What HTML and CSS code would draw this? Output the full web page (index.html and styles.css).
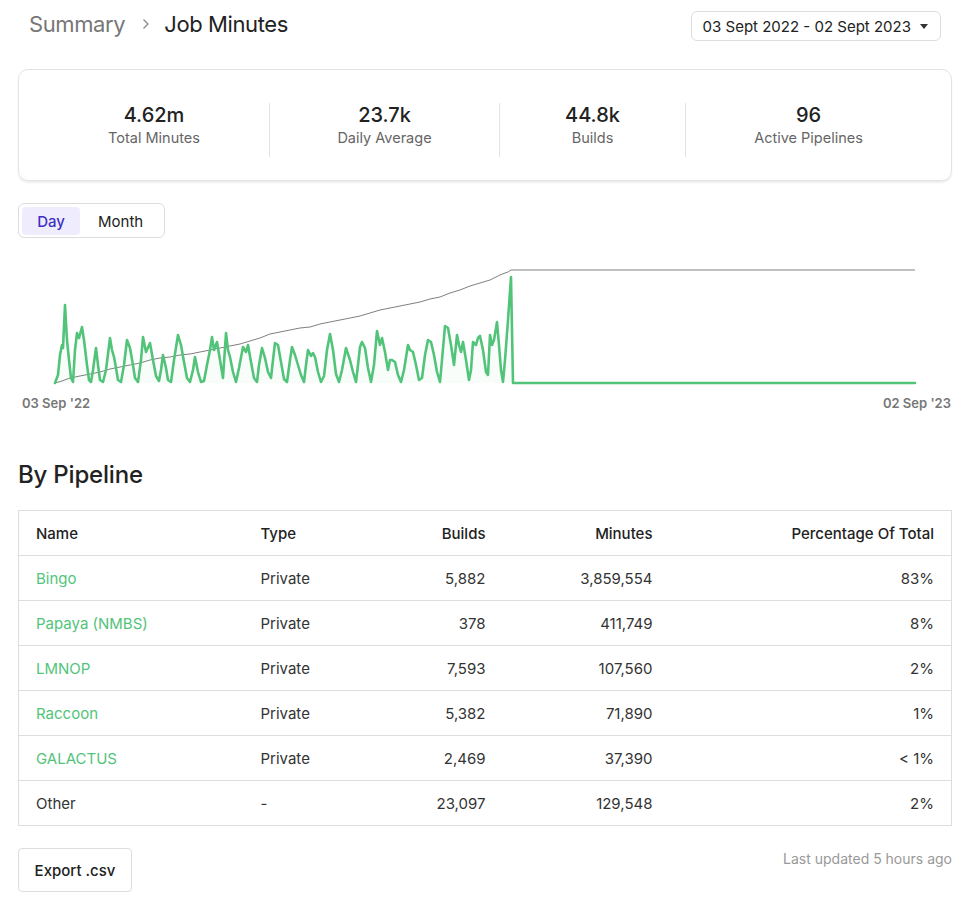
FILE: index.html
```html
<!DOCTYPE html>
<html lang="en">
<head>
<meta charset="utf-8">
<title>Job Minutes</title>
<link rel="stylesheet" href="styles.css">
</head>
<body>
<div class="page">
  <header class="header">
    <nav class="crumbs">
      <span class="crumb-muted">Summary</span>
      <svg class="chev" width="8" height="12" viewBox="0 0 8 12"><polyline points="1.5,1.5 6,6 1.5,10.5" fill="none" stroke="#8a8a8a" stroke-width="1.3"/></svg>
      <span class="crumb-current">Job Minutes</span>
    </nav>
    <button class="date-btn">03 Sept 2022 - 02 Sept 2023
      <svg class="caret" width="8" height="5" viewBox="0 0 8 5"><polygon points="0,0 8,0 4,5" fill="#333"/></svg>
    </button>
  </header>

  <section class="stats">
    <div class="stat s1"><div class="stat-val">4.62m</div><div class="stat-lbl">Total Minutes</div></div>
    <div class="stat s2"><div class="stat-val">23.7k</div><div class="stat-lbl">Daily Average</div></div>
    <div class="stat s3"><div class="stat-val">44.8k</div><div class="stat-lbl">Builds</div></div>
    <div class="stat s4"><div class="stat-val">96</div><div class="stat-lbl">Active Pipelines</div></div>
  </section>

  <div class="toggle">
    <button class="tog active">Day</button>
    <button class="tog">Month</button>
  </div>

  <div class="chart">
    <svg width="934" height="136" viewBox="0 0 934 136">
      <g transform="translate(-18,-255)">
        <polygon fill="#52c47a" fill-opacity="0.035" points="55,383 58,375 60,355 62,345 63,348 65,305 67,340 69,360 71,378 73,382 75,350 77,333 79,338 82,327 84,340 87,365 89,380 91,382 93,370 96,348 98,365 100,380 103,382 106,370 110,338 112,350 114,357 116,368 118,380 121,382 124,365 127,340 130,348 133,365 135,378 138,382 141,360 143,337 146,352 150,343 153,360 156,376 159,381 161,370 163,355 166,368 168,380 171,382 174,360 178,335 181,345 184,362 187,378 190,382 193,370 195,357 198,372 201,382 204,381 207,365 210,350 212,337 214,350 217,342 220,360 223,378 226,333 228,350 230,357 233,372 236,382 239,368 243,347 246,352 248,345 251,362 254,378 257,382 259,365 262,348 265,358 268,372 271,378 273,360 275,343 278,345 281,362 284,379 287,382 290,360 292,347 295,355 298,365 301,375 304,382 306,365 308,350 311,356 313,353 315,357 318,372 321,382 324,376 327,350 330,334 333,350 336,374 339,382 342,370 346,348 348,354 350,360 353,372 356,382 358,365 360,347 362,342 365,348 368,368 371,382 374,365 377,331 380,345 382,338 385,352 388,370 390,360 392,360 395,362 398,375 401,382 404,370 408,345 410,350 413,352 416,365 419,380 422,378 425,355 428,340 431,342 434,355 437,372 440,382 442,360 445,326 448,328 451,345 454,365 457,335 459,345 461,352 463,342 466,360 469,380 471,370 473,342 476,345 478,338 480,336 483,350 486,372 488,375 490,335 492,345 494,340 497,322 499,345 501,370 503,382 505,360 508,320 511,277 513,383"/>
        <polyline fill="none" stroke="#808080" stroke-width="1" points="55,383 62,381 70,378 80,376 90,374 100,372 110,369 120,367 130,365 140,363 150,360 160,358 170,357 180,355 190,354 200,352 210,350 220,348 230,346 240,344 250,341 260,338 270,334 280,332 290,330 300,328 310,327 320,324 330,322 340,320 350,318 360,316 370,313 380,310 390,308 400,306 410,304 420,302 430,299 440,297 450,293 460,290 470,286 480,283 490,280 500,275 505,273 508,272 511,270 915,270"/>
        <polyline fill="none" stroke="#52c47a" stroke-width="2.6" stroke-linejoin="round" stroke-linecap="round" points="55,383 58,375 60,355 62,345 63,348 65,305 67,340 69,360 71,378 73,382 75,350 77,333 79,338 82,327 84,340 87,365 89,380 91,382 93,370 96,348 98,365 100,380 103,382 106,370 110,338 112,350 114,357 116,368 118,380 121,382 124,365 127,340 130,348 133,365 135,378 138,382 141,360 143,337 146,352 150,343 153,360 156,376 159,381 161,370 163,355 166,368 168,380 171,382 174,360 178,335 181,345 184,362 187,378 190,382 193,370 195,357 198,372 201,382 204,381 207,365 210,350 212,337 214,350 217,342 220,360 223,378 226,333 228,350 230,357 233,372 236,382 239,368 243,347 246,352 248,345 251,362 254,378 257,382 259,365 262,348 265,358 268,372 271,378 273,360 275,343 278,345 281,362 284,379 287,382 290,360 292,347 295,355 298,365 301,375 304,382 306,365 308,350 311,356 313,353 315,357 318,372 321,382 324,376 327,350 330,334 333,350 336,374 339,382 342,370 346,348 348,354 350,360 353,372 356,382 358,365 360,347 362,342 365,348 368,368 371,382 374,365 377,331 380,345 382,338 385,352 388,370 390,360 392,360 395,362 398,375 401,382 404,370 408,345 410,350 413,352 416,365 419,380 422,378 425,355 428,340 431,342 434,355 437,372 440,382 442,360 445,326 448,328 451,345 454,365 457,335 459,345 461,352 463,342 466,360 469,380 471,370 473,342 476,345 478,338 480,336 483,350 486,372 488,375 490,335 492,345 494,340 497,322 499,345 501,370 503,382 505,360 508,320 511,277 513,383 915,383"/>
      </g>
    </svg>
    <div class="axis"><span>03 Sep '22</span><span>02 Sep '23</span></div>
  </div>

  <h2 class="section-title">By Pipeline</h2>

  <table class="tbl">
    <colgroup><col class="c1"><col class="c2"><col class="c3"><col class="c4"><col class="c5"></colgroup>
    <thead>
      <tr><th>Name</th><th>Type</th><th class="num">Builds</th><th class="num">Minutes</th><th class="num">Percentage Of Total</th></tr>
    </thead>
    <tbody>
      <tr><td><a class="pl">Bingo</a></td><td>Private</td><td class="num">5,882</td><td class="num">3,859,554</td><td class="num">83%</td></tr>
      <tr><td><a class="pl">Papaya (NMBS)</a></td><td>Private</td><td class="num">378</td><td class="num">411,749</td><td class="num">8%</td></tr>
      <tr><td><a class="pl">LMNOP</a></td><td>Private</td><td class="num">7,593</td><td class="num">107,560</td><td class="num">2%</td></tr>
      <tr><td><a class="pl">Raccoon</a></td><td>Private</td><td class="num">5,382</td><td class="num">71,890</td><td class="num">1%</td></tr>
      <tr><td><a class="pl">GALACTUS</a></td><td>Private</td><td class="num">2,469</td><td class="num">37,390</td><td class="num">&lt; 1%</td></tr>
      <tr><td>Other</td><td>-</td><td class="num">23,097</td><td class="num">129,548</td><td class="num">2%</td></tr>
    </tbody>
  </table>

  <footer class="footer">
    <button class="export">Export .csv</button>
    <span class="updated">Last updated 5 hours ago</span>
  </footer>
</div>
</body>
</html>
```
FILE: styles.css
```css
* { box-sizing: border-box; }
body {
  margin: 0;
  font-family: Inter, "Noto Sans", "Liberation Sans", sans-serif;
  color: #222;
  background: #fff;
}
.page {
  width: 934px;
  margin-left: 18px;
}
.header {
  display: flex;
  justify-content: space-between;
  align-items: center;
  padding-top: 10px;
  padding-right: 11px;
  height: 41px;
}
.crumbs {
  display: flex;
  align-items: center;
  padding-left: 11px;
  font-size: 22px;
  letter-spacing: -0.4px;
  line-height: 28px;
  margin-top: -3px;
}
.crumb-muted { color: #777; }
.chev { margin: 0 14px 0 17px; }
.crumb-current { color: #222; }
.date-btn {
  font-family: inherit;
  font-size: 15px;
  color: #222;
  background: #fff;
  border: 1px solid #ddd;
  border-radius: 6px;
  height: 30px;
  padding: 0 12px 0 11px;
  margin-top: 1px;
  display: flex;
  align-items: center;
  gap: 9px;
}
.stats {
  margin-top: 28px;
  border: 1px solid #e3e3e3;
  border-radius: 10px;
  box-shadow: 0 2px 2px rgba(0,0,0,0.07);
  display: grid;
  grid-template-columns: 230px 230px 186px 1fr;
  padding: 33px 20px 23px;
  height: 112px;
}
.stat {
  text-align: center;
  padding-bottom: 8px;
}
.stat + .stat { border-left: 1px solid #e3e3e3; }
.stat-val {
  font-size: 20px;
  font-weight: 500;
  line-height: 24px;
  color: #222;
}
.stat-lbl {
  font-size: 14.5px;
  line-height: 22px;
  color: #666;
}
.toggle {
  margin-top: 22px;
  display: inline-flex;
  border: 1px solid #ddd;
  border-radius: 6px;
  padding: 3px;
  height: 35px;
}
.tog {
  font-family: inherit;
  font-size: 15px;
  border: 0;
  background: transparent;
  color: #222;
  border-radius: 4px;
  height: 28px;
  padding: 0 18px 0 18px;
}
.tog.active {
  background: #efedfd;
  color: #3d2fc6;
  font-weight: 500;
  padding: 0 15px;
  width: 58px;
}
.chart {
  margin-top: 17px;
}
.chart svg { display: block; }
.axis {
  display: flex;
  justify-content: space-between;
  font-size: 13px;
  font-weight: 600;
  color: #777;
  line-height: 16px;
  padding: 4px 2px 0 4px;
  margin-right: -1px;
}
.section-title {
  margin: 49px 0 0;
  font-size: 24px;
  font-weight: 500;
  line-height: 30px;
  letter-spacing: -0.2px;
  color: #222;
}
.tbl {
  margin-top: 20px;
  width: 934px;
  border-collapse: collapse;
  border: 1px solid #ddd;
  table-layout: fixed;
  font-size: 15px;
}
.c1 { width: 225px; }
.c2 { width: 136px; }
.c3 { width: 123px; }
.c4 { width: 167px; }
.tbl th, .tbl td {
  height: 45px;
  padding: 0 17px;
  text-align: left;
  border-bottom: 1px solid #ddd;
  white-space: nowrap;
}
.tbl th {
  font-weight: 500;
  color: #222;
}
.tbl td { color: #333; }
.tbl .num { text-align: right; }
.pl { color: #52c47a; text-decoration: none; }
.footer {
  margin-top: 22px;
  display: flex;
  justify-content: space-between;
  align-items: flex-start;
}
.export {
  font-family: inherit;
  font-size: 15px;
  font-weight: 500;
  color: #222;
  background: #fff;
  border: 1px solid #ddd;
  border-radius: 4px;
  height: 44px;
  width: 114px;
}
.updated {
  font-size: 14px;
  color: #999;
  line-height: 22px;
}
```
